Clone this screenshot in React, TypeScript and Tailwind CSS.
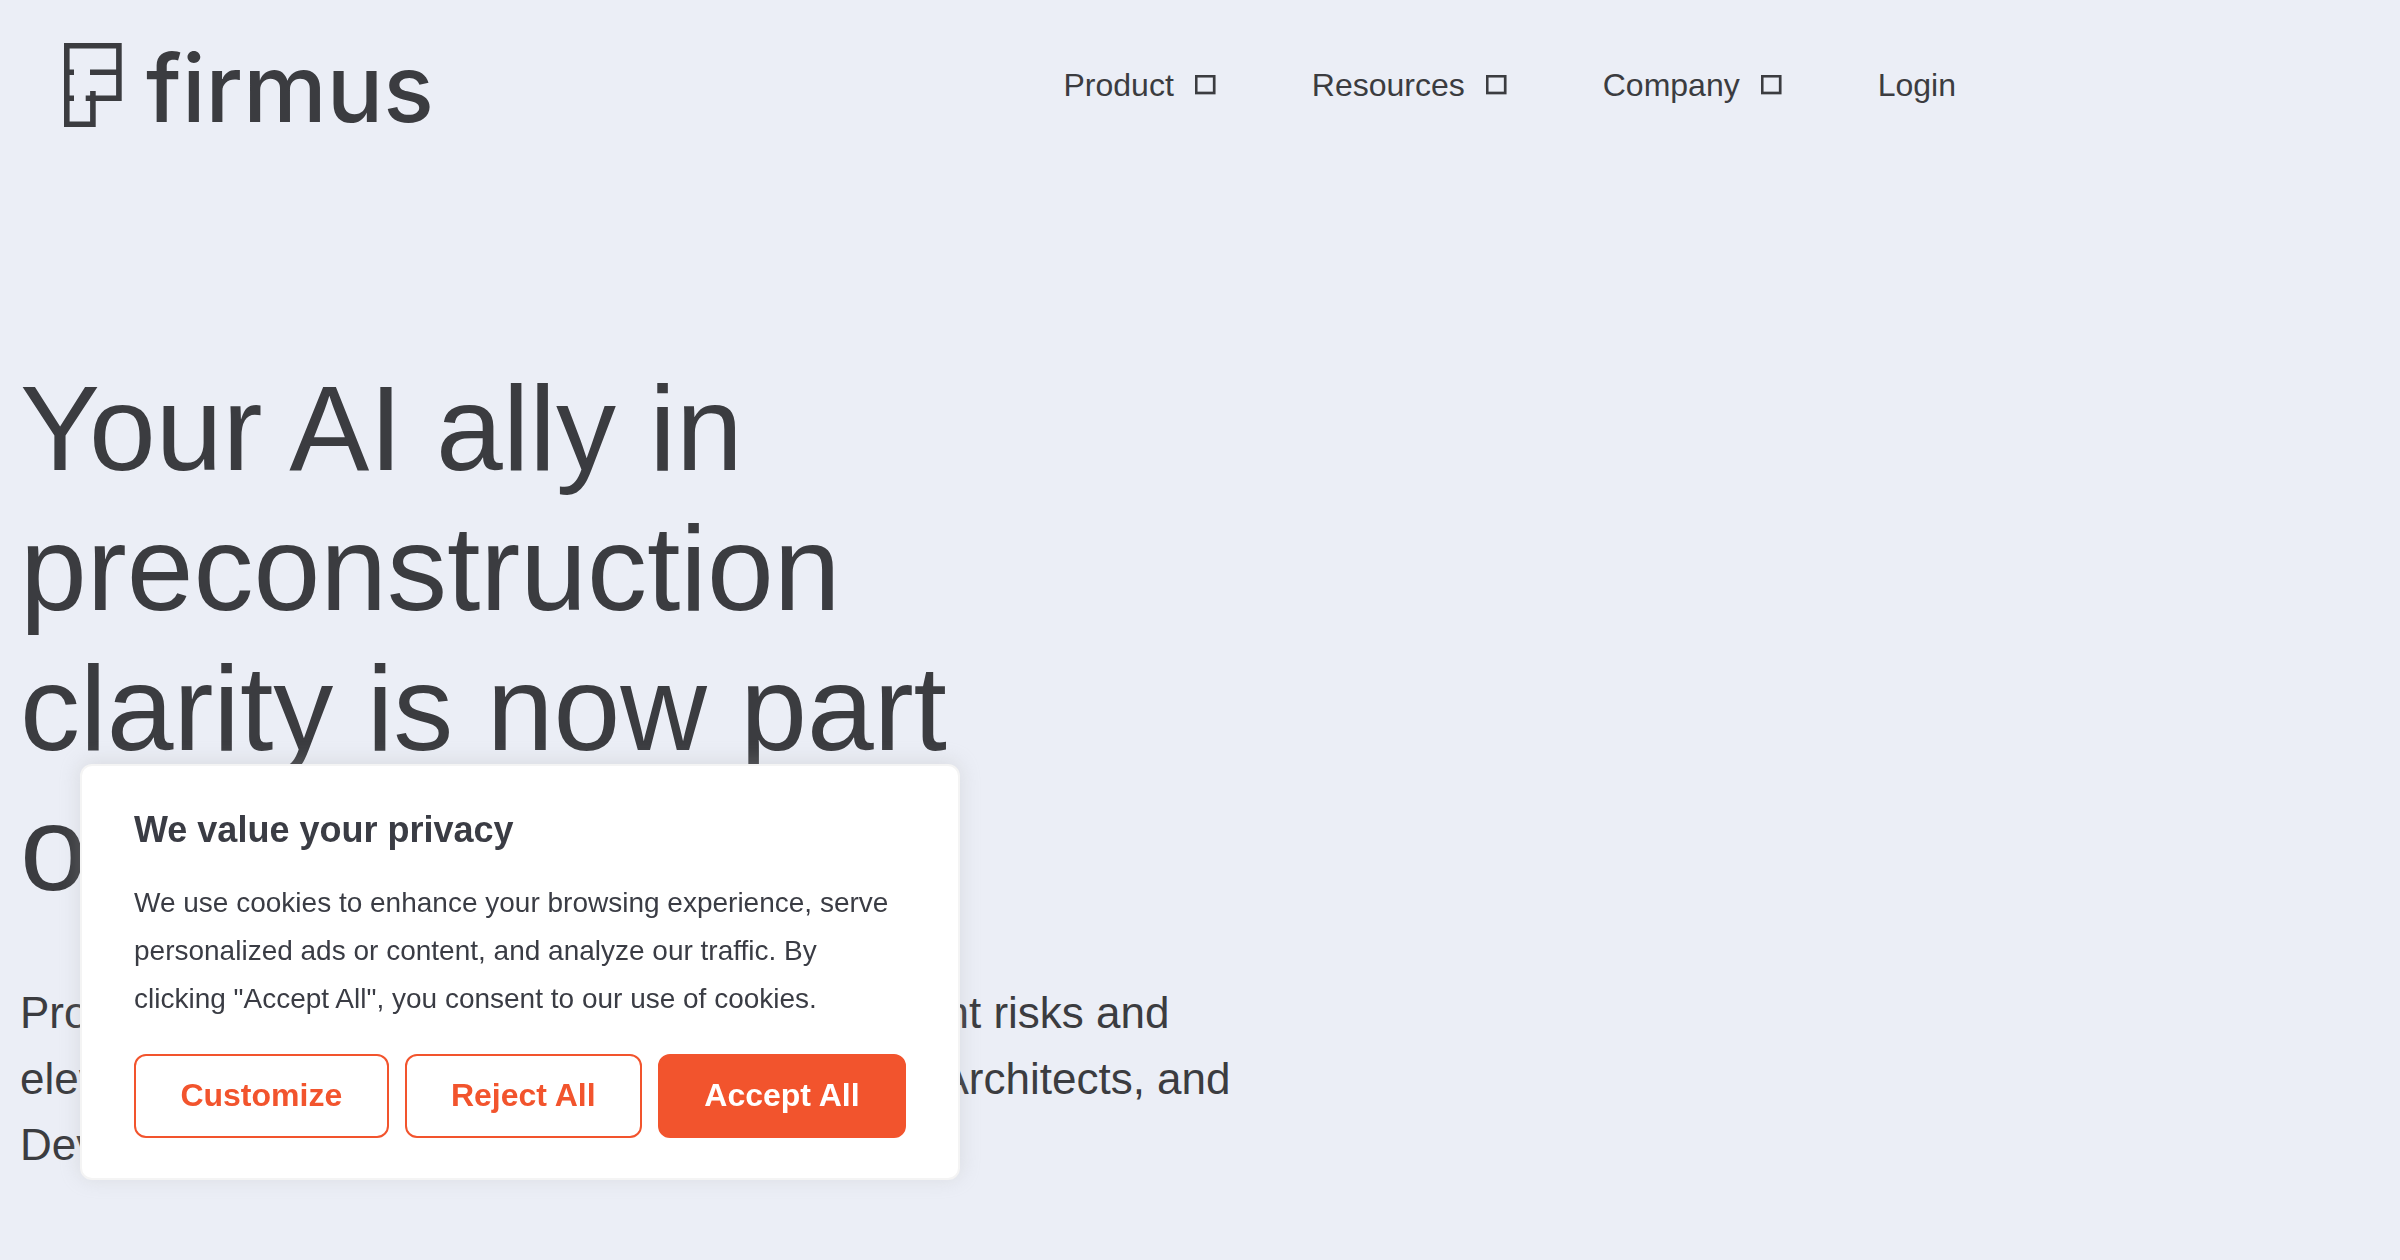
import { useState } from "react";

const NAV_ITEMS = [
  { label: "Product", hasMenu: true },
  { label: "Resources", hasMenu: true },
  { label: "Company", hasMenu: true },
  { label: "Login", hasMenu: false },
];

function Logo() {
  return (
    <svg width="370" height="84" viewBox="0 0 370 84" fill="none" role="img" aria-label="firmus" className="overflow-visible">
      {/* Floor plan mark */}
      <g stroke="#3b3c40" strokeWidth="5.6">
        <path d="M2.8 2.8H54.9V55.2H28.9V81.2H2.8Z" />
        <path d="M0 29.2H10M26 29.2H55M0 55.2H10M21.7 55.2H31M28.9 48V56" />
      </g>
      <text x="82" y="79" fontSize="94" fontWeight="500" fill="#3b3c40" className="font-['Inter',sans-serif]">
        firmus
      </text>
    </svg>
  );
}

function MenuIcon() {
  return (
    <svg width="21" height="20" viewBox="0 0 21 20" fill="none" aria-hidden="true">
      <rect x="1.2" y="1.2" width="18" height="16.8" stroke="#3b3c40" strokeWidth="2.7" />
    </svg>
  );
}

function Header() {
  return (
    <header className="flex h-[170px] items-center justify-between pr-[444px] pl-16">
      <a href="#home" aria-label="firmus home">
        <Logo />
      </a>
      <nav className="flex items-center gap-24">
        {NAV_ITEMS.map((item) => (
          <a key={item.label} href={`#${item.label.toLowerCase()}`} className="flex items-center gap-[21px] text-[32px] leading-10">
            {item.label}
            {item.hasMenu && <MenuIcon />}
          </a>
        ))}
      </nav>
    </header>
  );
}

function CookieBanner({ onClose }: { onClose: () => void }) {
  const outline =
    "h-[84px] flex-auto rounded-xl border-2 border-[#f2542d] px-10 pb-0.5 text-[32px] font-bold text-[#f2542d]";

  return (
    <section
      aria-labelledby="cookie-title"
      className="fixed bottom-20 left-20 w-[880px] rounded-xl border-2 border-[#f4f4f4] bg-white px-[52px] py-10 text-[#3a3c44] shadow-[0_-2px_20px_0_#acabab4d]"
    >
      <h2 id="cookie-title" className="mb-[25px] text-[36px] leading-[48px] font-bold">
        We value your privacy
      </h2>
      <p className="mb-[31px] text-[28px] leading-[48px]">
        We use cookies to enhance your browsing experience, serve personalized ads or content, and analyze our traffic.
        By clicking "Accept All", you consent to our use of cookies.
      </p>
      <div className="flex gap-4">
        <button onClick={onClose} className={outline}>
          Customize
        </button>
        <button onClick={onClose} className={outline}>
          Reject All
        </button>
        <button
          onClick={onClose}
          className="h-[84px] flex-auto rounded-xl border-2 border-[#f2542d] bg-[#f2542d] px-10 pb-0.5 text-[32px] font-bold text-white"
        >
          Accept All
        </button>
      </div>
    </section>
  );
}

export default function App() {
  const [showBanner, setShowBanner] = useState(true);

  return (
    <div className="min-h-screen bg-[#ebeef6] font-['Liberation_Sans',Arial,sans-serif] text-[#3b3c40]">
      <Header />
      <main className="px-5 pt-[188px]">
        <h1 className="max-w-[980px] text-[120px] leading-[140px]">
          Your AI ally in preconstruction clarity is now part of Bluebeam
        </h1>
        <p className="mt-[62px] max-w-[1240px] text-[44px] leading-[66px]">
          Proactively identify scope gaps, and procurement risks and elevate project teams for Owners, Contractors,
          Architects, and Developers.
        </p>
      </main>
      {showBanner && <CookieBanner onClose={() => setShowBanner(false)} />}
    </div>
  );
}
